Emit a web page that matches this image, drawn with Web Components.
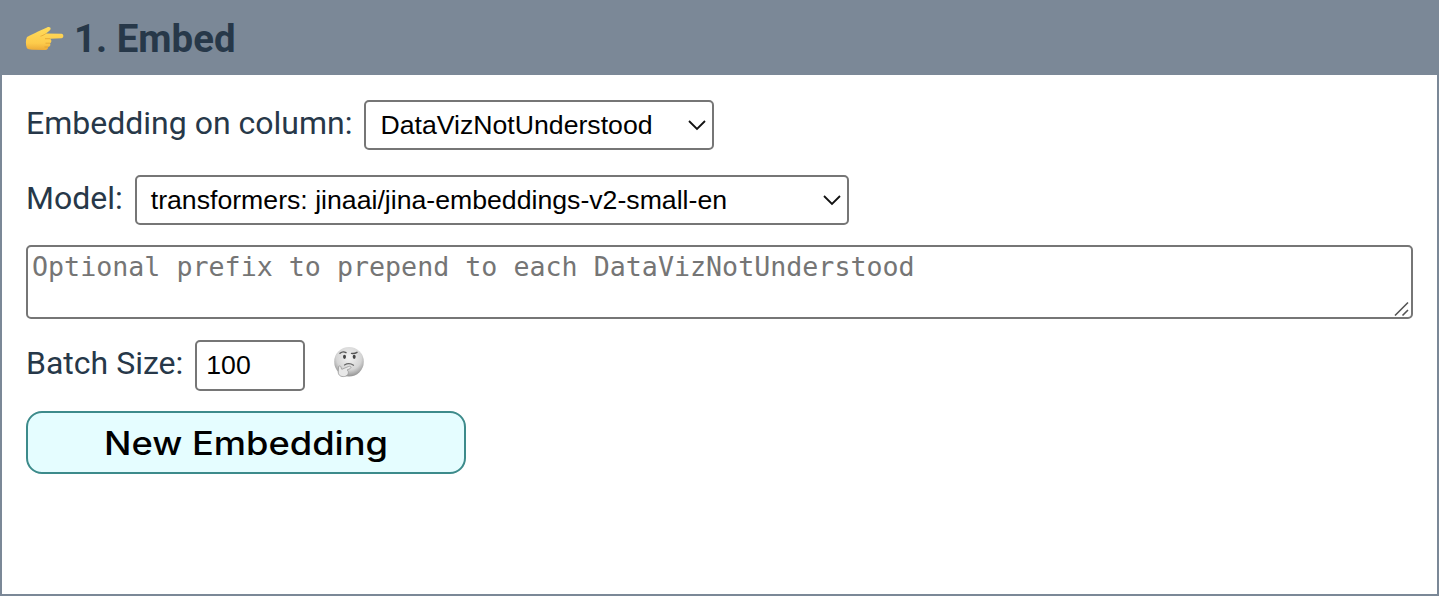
<!DOCTYPE html>
<html lang="en"><head><meta charset="utf-8"><title>Embed</title>
<style>html,body{margin:0;height:100%;background:#fff}body{font-family:Roboto,sans-serif;color:#273849}</style></head>
<body>
<embed-panel>
  <hand-icon slot="icon"></hand-icon><span slot="title">1. Embed</span>
  <form-row style="--h:50px;--mb:25px"><span slot="label">Embedding on column:</span><select-box style="--w:350px">DataVizNotUnderstood</select-box></form-row>
  <form-row style="--h:50px;--mb:20px"><span slot="label">Model:</span><select-box style="--w:714px">transformers: jinaai/jina-embeddings-v2-small-en</select-box></form-row>
  <prefix-area>Optional prefix to prepend to each DataVizNotUnderstood</prefix-area>
  <form-row style="--h:51px;--mb:20px;--lift:6px"><span slot="label">Batch Size:</span><number-box>100</number-box><think-icon></think-icon></form-row>
  <action-button label="New Embedding"></action-button>
</embed-panel>
<script>
function define(name, html){
  customElements.define(name, class extends HTMLElement{
    constructor(){super();this.attachShadow({mode:'open'}).innerHTML=html;}
  });
}
define('embed-panel',`<style>
:host{display:flex;flex-direction:column;box-sizing:border-box;height:596px;border:2px solid #7b8897;border-top:0;background:#fff}
header{display:flex;align-items:center;height:75px;padding-left:23px;gap:10px;background:#7b8897;font-weight:700;font-size:38.4px;line-height:75px;box-sizing:border-box}
.title{padding-top:1px}
main{padding:25px 24px 0;display:flex;flex-direction:column;align-items:flex-start}
</style><header><slot name="icon"></slot><span class="title"><slot name="title"></slot></span></header><main><slot></slot></main>`);
define('form-row',`<style>
:host{display:flex;align-items:center;height:var(--h);gap:12px;margin-bottom:var(--mb);font-size:32px;white-space:nowrap}
.label{line-height:46px;padding-bottom:var(--lift,4px)}
</style><span class="label"><slot name="label"></slot></span><slot></slot>`);
define('select-box',`<style>
:host{display:flex;align-items:center;justify-content:space-between;box-sizing:border-box;width:var(--w);height:50px;border:2px solid #767676;border-radius:5px;padding:0 6px 0 14px;font:26.67px "Liberation Sans",Arial,sans-serif;color:#000;background:#fff}
svg{display:block}
</style><span><slot></slot></span><svg width="18" height="12" viewBox="0 0 18 12"><path d="M1 2 9 10 17 2" fill="none" stroke="#111" stroke-width="1.8"/></svg>`);
define('prefix-area',`<style>
:host{display:flex;justify-content:space-between;align-items:flex-end;box-sizing:border-box;align-self:stretch;height:74px;border:2px solid #767676;border-radius:5px;padding:4px 1px 0 4px;margin-bottom:21px;font:26.67px/32px "DejaVu Sans Mono",monospace;color:#757575}
span{align-self:flex-start;white-space:nowrap}
svg{display:block}
</style><span><slot></slot></span><svg width="16" height="16" viewBox="0 0 16 16"><path d="M1 14.5 14 1.5M8.5 14.5l5.5-5.5" stroke="#555" stroke-width="1.6"/></svg>`);
define('number-box',`<style>
:host{display:flex;align-items:center;box-sizing:border-box;width:110px;height:51px;border:2px solid #767676;border-radius:5px;padding-left:9px;font:26.67px "Liberation Sans",Arial,sans-serif;color:#000}
</style><slot></slot>`);
define('hand-icon',`<style>:host{display:block;width:39px;height:26px;margin-top:2px}svg{display:block}</style>
<svg width="39" height="26" viewBox="0 0 39 26"><defs><linearGradient id="g" x2="0" y2="1"><stop stop-color="#ffdc5c"/><stop offset=".7" stop-color="#fdcb4b"/><stop offset="1" stop-color="#ecaa38"/></linearGradient></defs>
<path d="M2 11C6 9 9 7.5 13 5.5L22 1.4C24 .5 26 1.3 25.6 3.1C25.3 4.5 23.4 5.7 20.8 7.6L36.5 7.8C39 8 39 12 36.5 12.2L25 12.7C27 14 26.7 16.5 25 17.2C26 19 25 20.7 23.2 21C23.2 23 21.5 24.3 19.5 24.1L7 23.7C4.5 23.5 2.7 23 1.8 22C.6 18.5.5 14 2 11Z" fill="url(#g)"/>
<path d="M20.8 7.6C19 9 17 9.8 15.5 10.2M25 12.7H20M25 17.2H20.5M23.2 21H19.5" fill="none" stroke="#d99528" stroke-width=".9" opacity=".65"/></svg>`);
define('think-icon',`<style>:host{display:block;width:32px;height:32px;margin:-8px 0 0 16px}svg{display:block}</style>
<svg width="32" height="32" viewBox="0 0 32 32"><defs><radialGradient id="f" cx=".5" cy=".35" r=".65"><stop stop-color="#f4f4f4"/><stop offset=".65" stop-color="#d5d5d5"/><stop offset="1" stop-color="#929292"/></radialGradient></defs>
<circle cx="16" cy="15.8" r="14.8" fill="url(#f)"/>
<path d="M7 7.2Q10 4.8 13 6.7M18.5 7.4Q21.5 8 24 6.3" fill="none" stroke="#555" stroke-width="1.4" stroke-linecap="round"/>
<ellipse cx="11.5" cy="10.8" rx="1.5" ry="2.1" fill="#444"/><ellipse cx="21.2" cy="10.8" rx="1.5" ry="2.1" fill="#444"/>
<path d="M11.5 19Q16 16.2 20.5 19.2" fill="none" stroke="#666" stroke-width="1.3" stroke-linecap="round"/>
<path d="M5.6 20.5C6.8 19.3 8.2 20.2 8.2 22L8.8 23.3 15.7 20.4C18 19.6 18.7 21.6 17.1 22.6L14 24C16.4 25 15.7 30 11.5 30.5C8 31 5.2 29.4 5.2 26Z" fill="#e8e8e8" stroke="#999" stroke-width=".8"/></svg>`);
customElements.define('action-button',class extends HTMLElement{
  constructor(){super();this.attachShadow({mode:'open'}).innerHTML=`<style>
:host{display:block}
button{display:flex;justify-content:center;align-items:center;box-sizing:border-box;width:440px;height:63px;padding:0;border:2px solid #3d8b8b;border-radius:16px;background:#e5fdff;color:#000}
svg{display:block}
text{font:500 32px Inter,sans-serif}
</style><button><svg width="436" height="59"><text x="76" y="42" textLength="284" lengthAdjust="spacingAndGlyphs">${this.getAttribute('label')}</text></svg></button>`;}
});
</script></body></html>
